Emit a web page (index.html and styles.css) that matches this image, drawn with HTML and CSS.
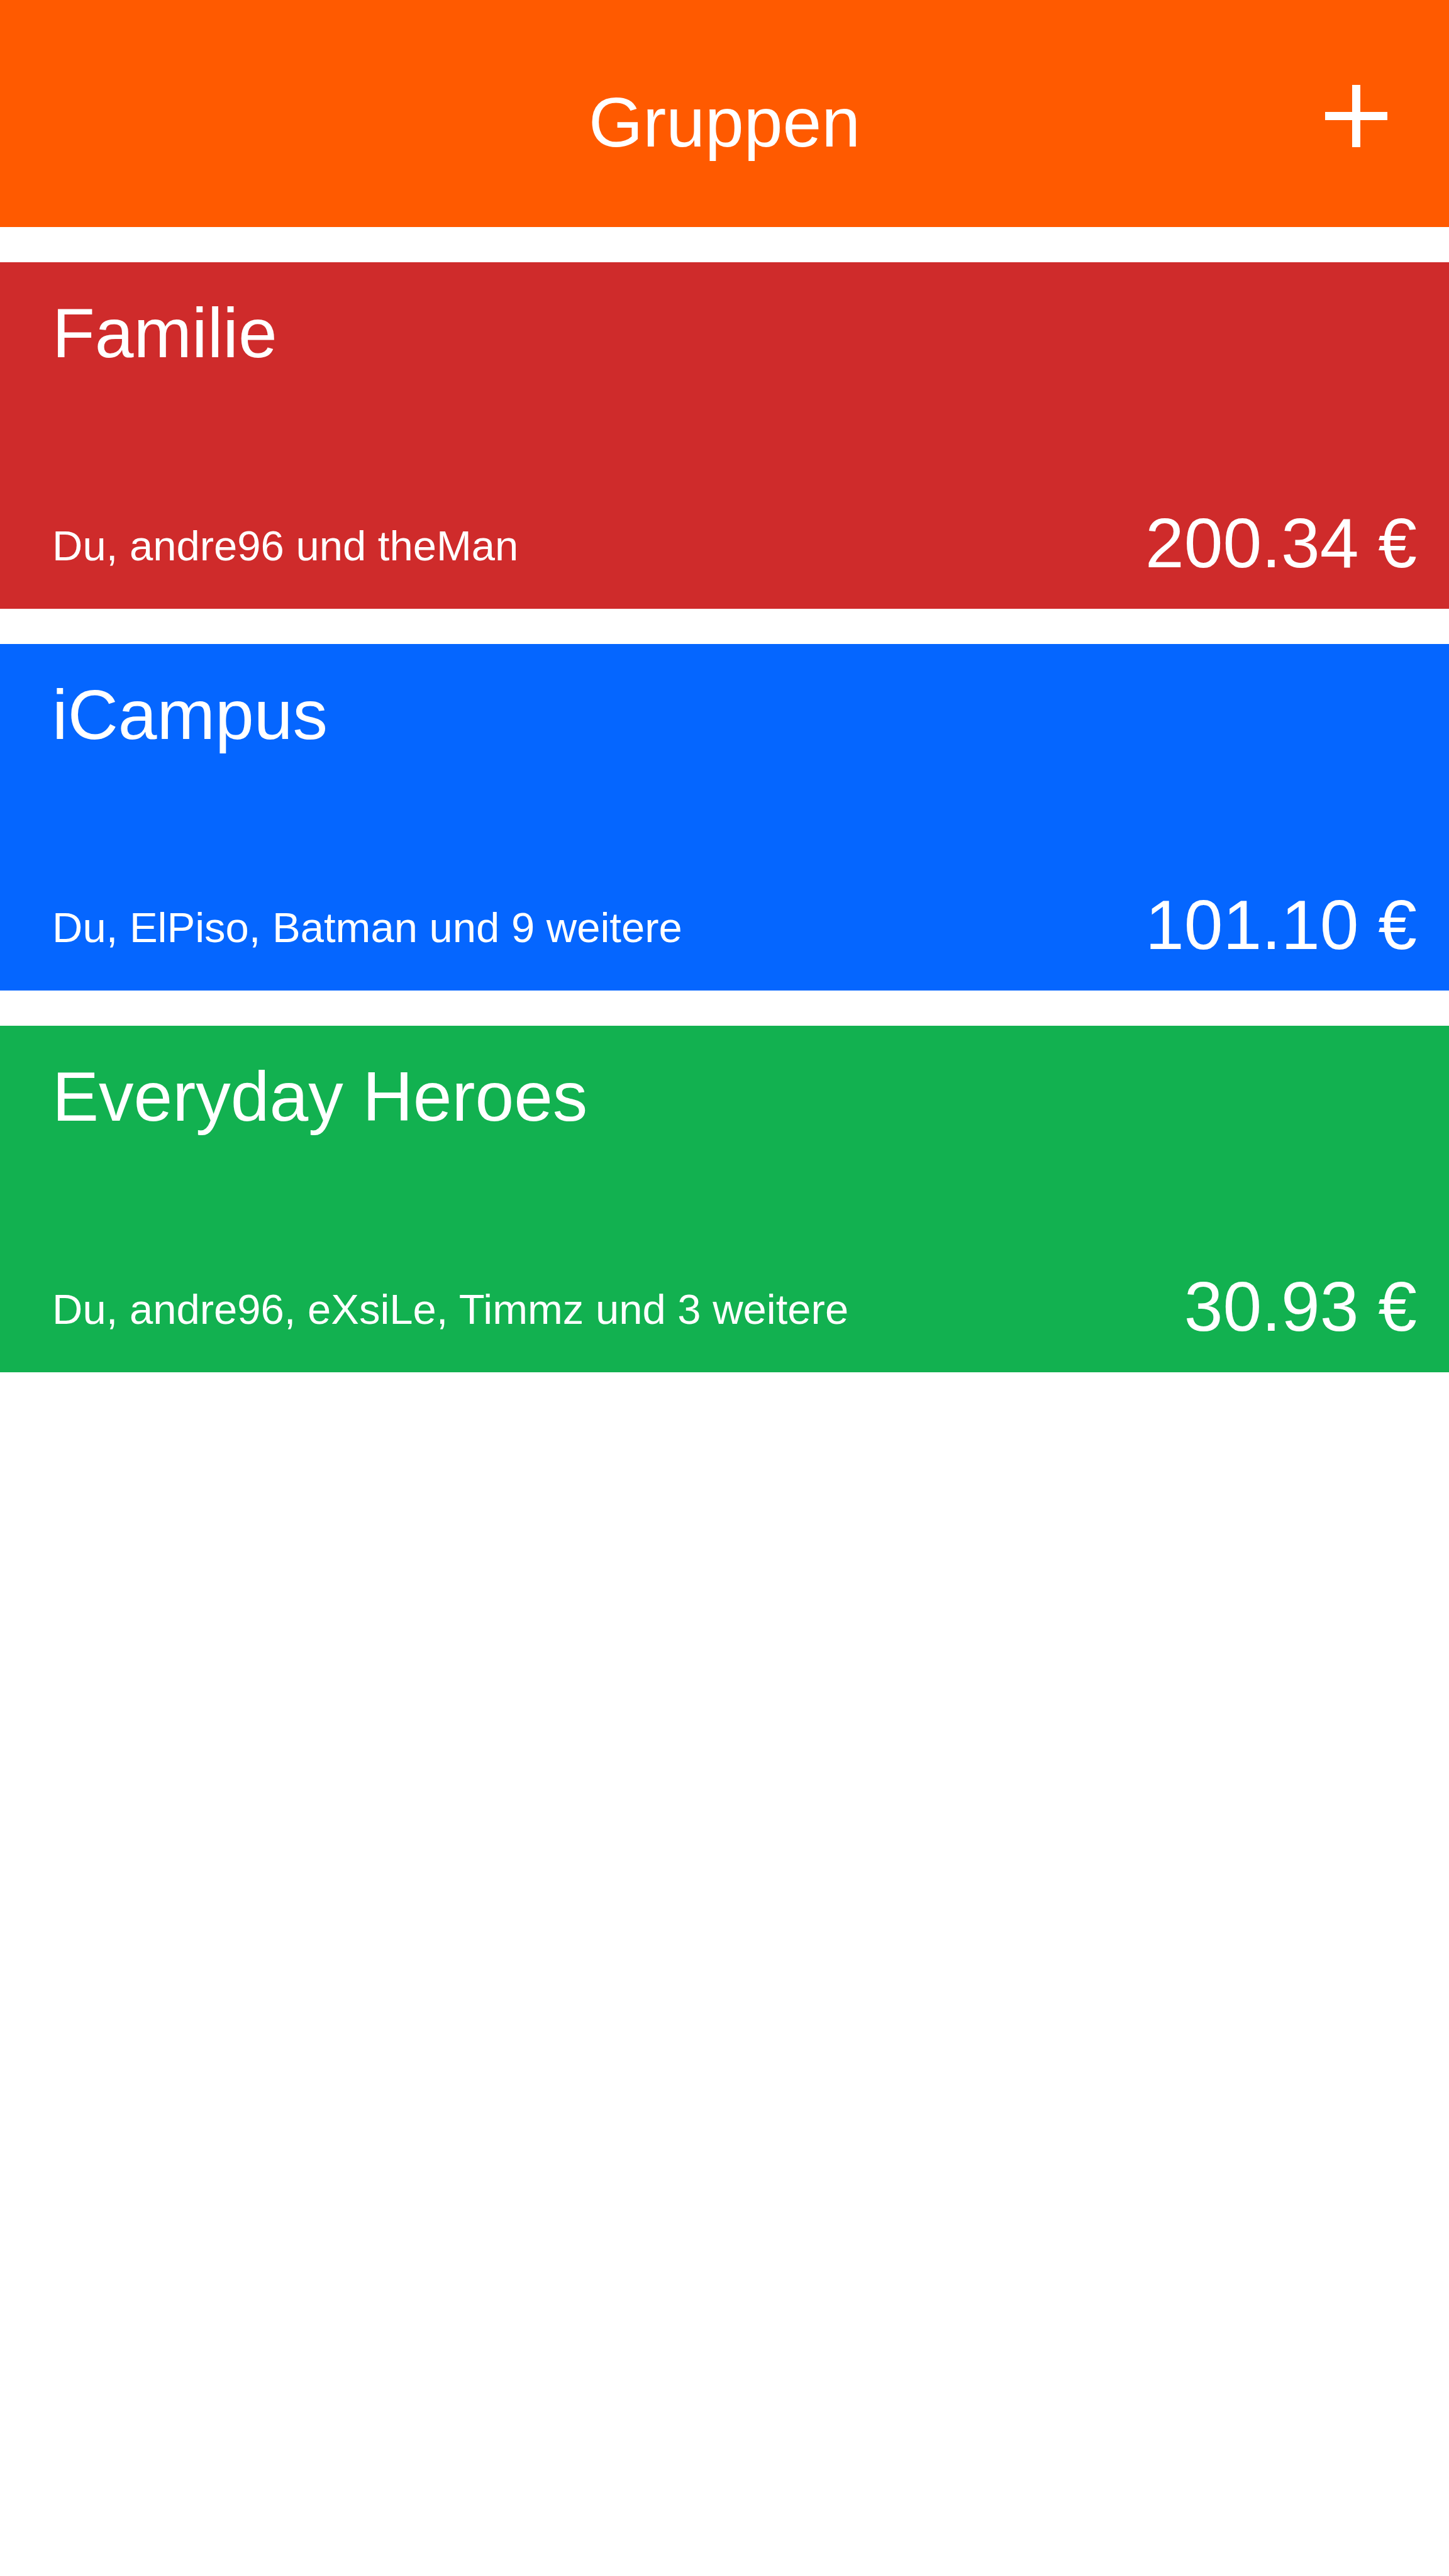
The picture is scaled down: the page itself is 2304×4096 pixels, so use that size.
FILE: index.html
```html
<!DOCTYPE html>
<html lang="de">
<head>
  <meta charset="utf-8">
  <meta name="viewport" content="width=device-width, initial-scale=1">
  <title>Gruppen</title>
  <link rel="stylesheet" href="styles.css">
</head>
<body>
  <header class="topbar">
    <h1 class="topbar-title">Gruppen</h1>
    <button class="add-button" type="button" aria-label="Gruppe hinzufügen">
      <svg class="add-icon" viewBox="0 0 99 99" aria-hidden="true">
        <path d="M43 0h13v43h43v13H56v43H43V56H0V43h43z" fill="currentColor"/>
      </svg>
    </button>
  </header>
  <main>
    <ul class="groups">
      <li>
        <a class="group group-red" href="#familie">
          <h2 class="group-name">Familie</h2>
          <div class="group-details">
            <p class="group-members">Du, andre96 und theMan</p>
            <p class="group-amount">200.34 €</p>
          </div>
        </a>
      </li>
      <li>
        <a class="group group-blue" href="#icampus">
          <h2 class="group-name">iCampus</h2>
          <div class="group-details">
            <p class="group-members">Du, ElPiso, Batman und 9 weitere</p>
            <p class="group-amount">101.10 €</p>
          </div>
        </a>
      </li>
      <li>
        <a class="group group-green" href="#everyday-heroes">
          <h2 class="group-name">Everyday Heroes</h2>
          <div class="group-details">
            <p class="group-members">Du, andre96, eXsiLe, Timmz und 3 weitere</p>
            <p class="group-amount">30.93 €</p>
          </div>
        </a>
      </li>
    </ul>
  </main>
</body>
</html>
```
FILE: styles.css
```css
* {
  box-sizing: border-box;
}

body {
  margin: 0;
  background: #fff;
  color: #fff;
  font-family: "Liberation Sans", Helvetica, Arial, sans-serif;
  font-size: 111px;
  line-height: 128px;
}

h1,
h2,
p {
  margin: 0;
  font-size: inherit;
  font-weight: 400;
}

/* Top bar: the title stays centred, the button sits at the right edge */
.topbar {
  display: grid;
  grid-template-columns: 1fr auto 1fr;
  align-items: start;
  padding: 131px 98px 102px;
  background: #ff5a00;
}

.topbar-title {
  grid-column: 2;
}

.add-button {
  justify-self: end;
  padding: 4px 0;
  border: 0;
  background: none;
  color: inherit;
  cursor: pointer;
}

.add-icon {
  display: block;
  width: 99px;
  height: 99px;
}

/* Group list */
.groups {
  display: flex;
  flex-direction: column;
  gap: 56px;
  margin: 0;
  padding: 56px 0;
  list-style: none;
}

.group {
  display: flex;
  flex-direction: column;
  gap: 206px;
  padding: 49px 51px 40px 83px;
  color: inherit;
  text-decoration: none;
}

.group-red {
  background: #cf2b2b;
}

.group-blue {
  background: #0566ff;
}

.group-green {
  background: #12b150;
}

.group-details {
  display: flex;
  justify-content: space-between;
  align-items: flex-end;
}

.group-members {
  padding-bottom: 22px;
  font-size: 67px;
  line-height: 76px;
}

.group-amount {
  white-space: nowrap;
}
```
